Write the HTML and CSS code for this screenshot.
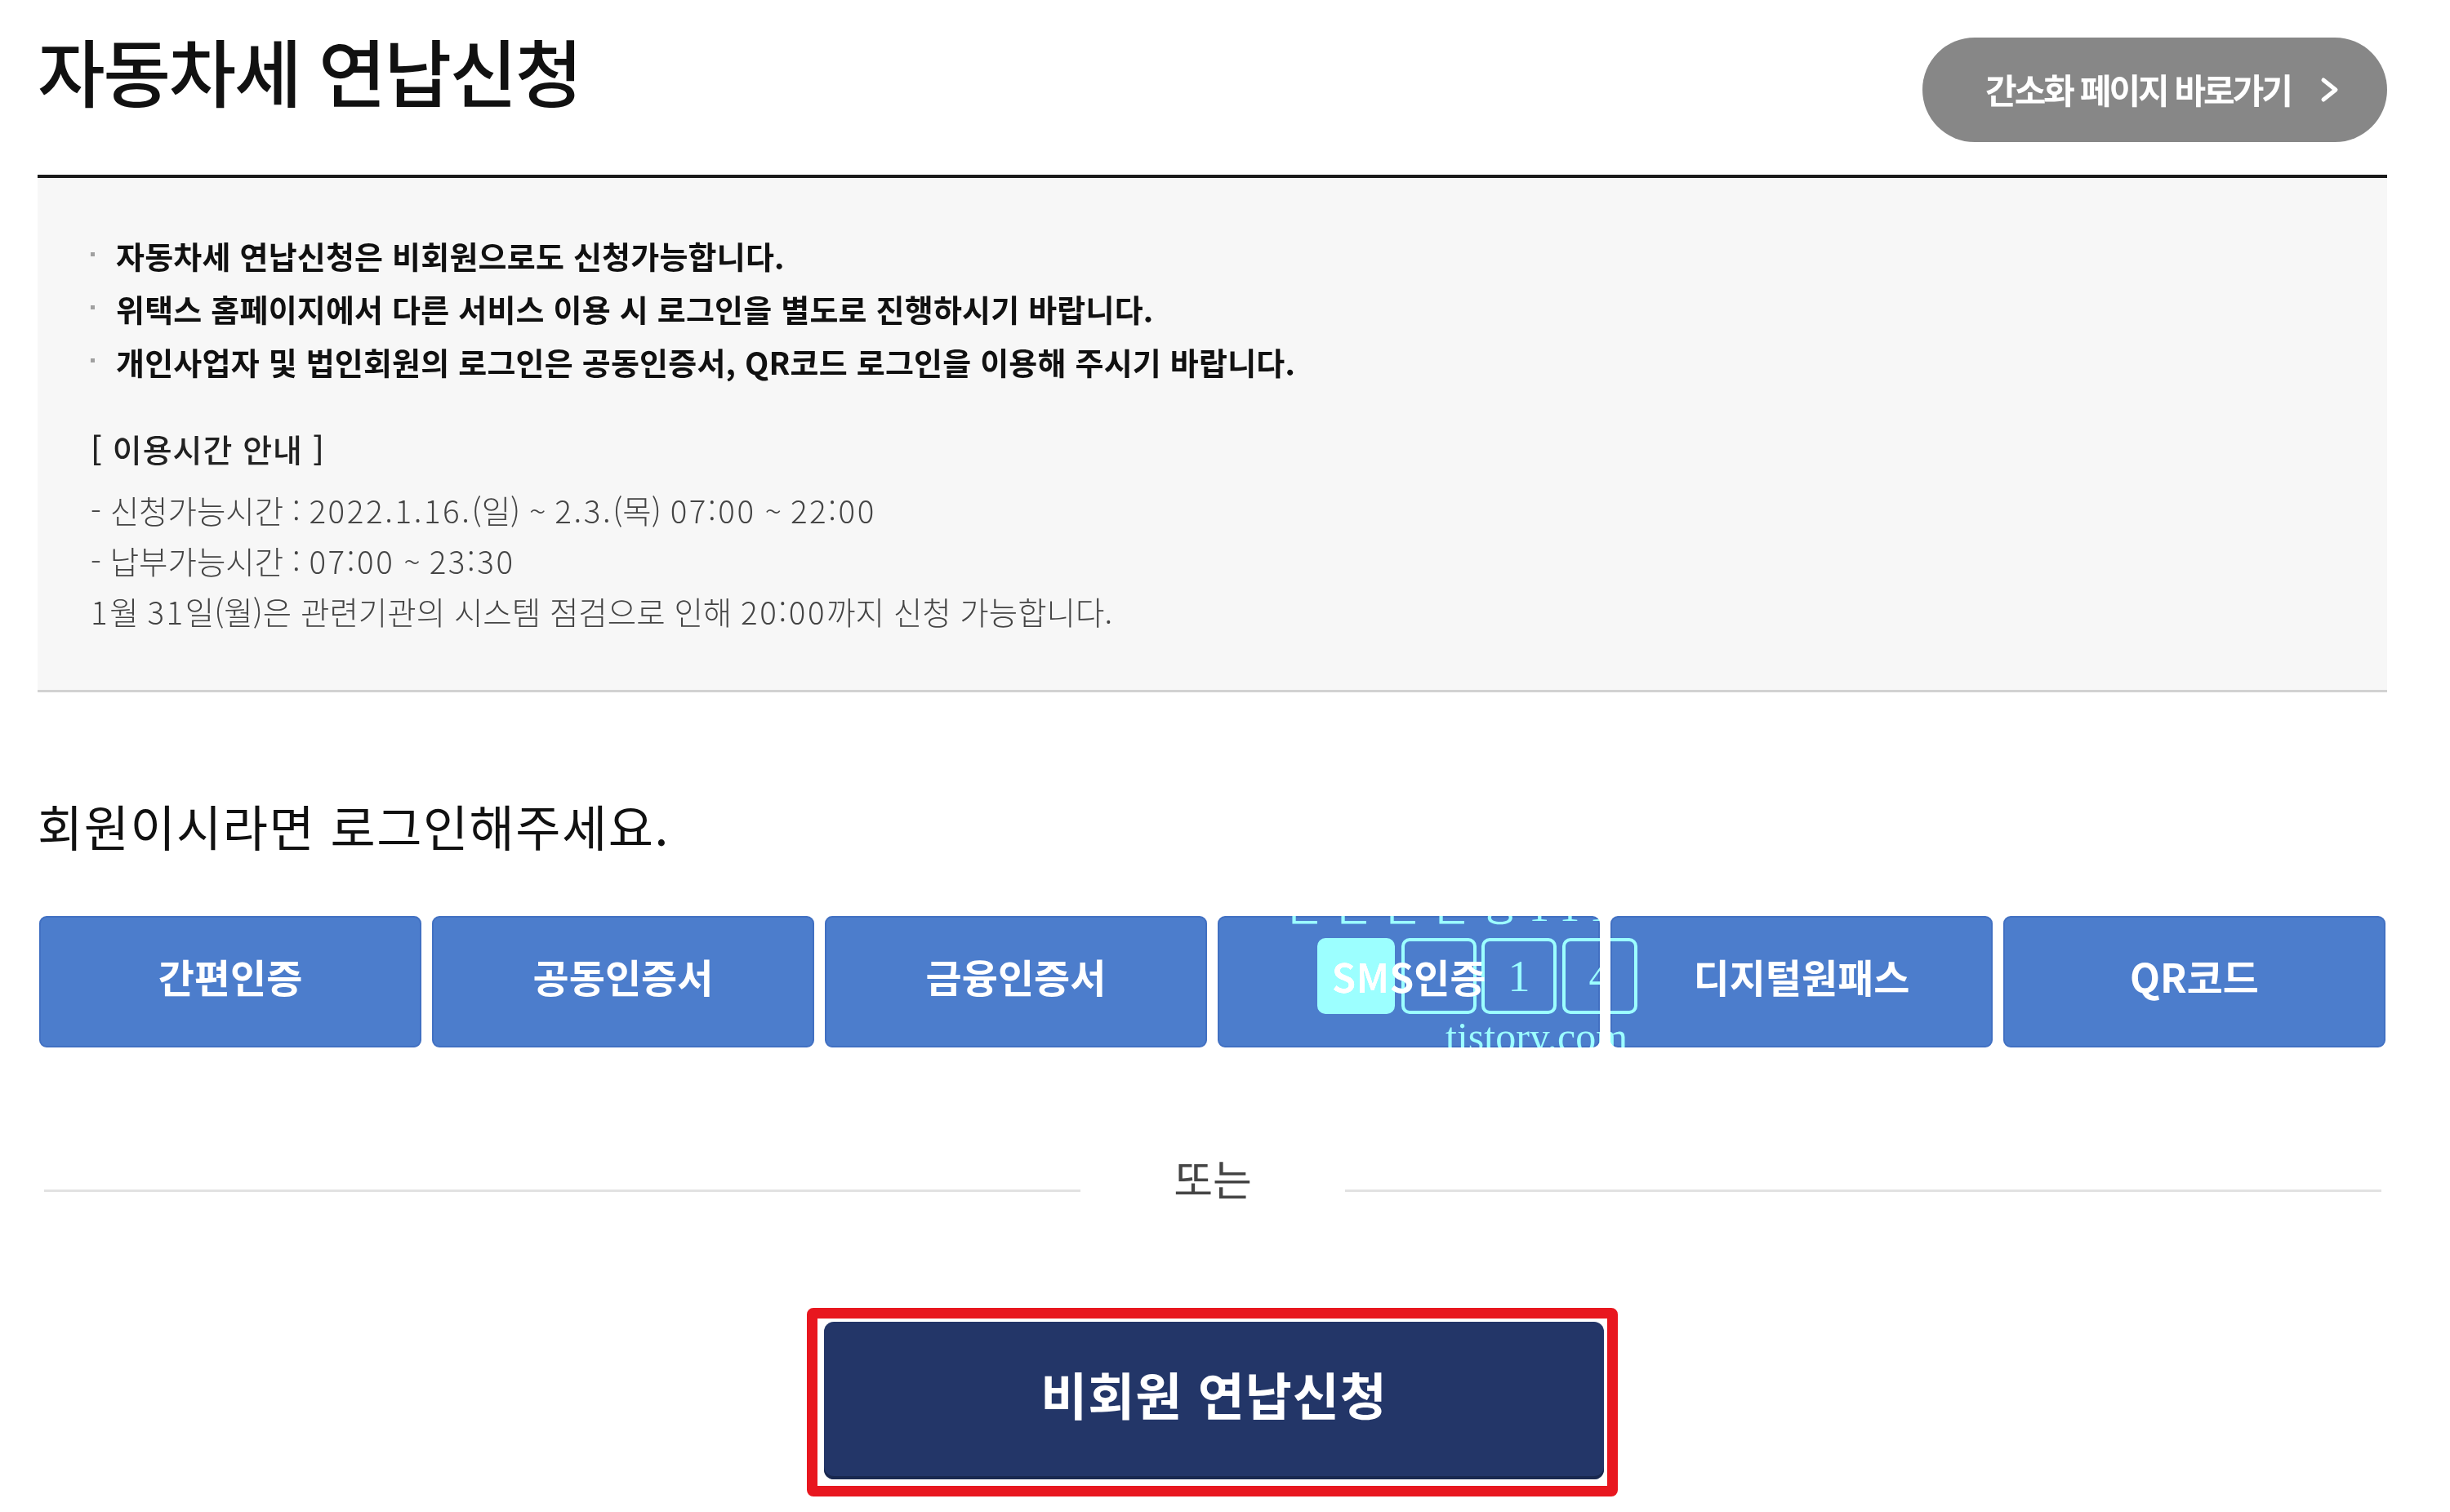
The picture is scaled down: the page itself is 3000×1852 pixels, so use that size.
FILE: index.html
```html
<!DOCTYPE html>
<html lang="ko">
<head>
    <meta charset="UTF-8">
    <meta name="viewport" content="width=device-width, initial-scale=1.0">
    <title>자동차세 연납신청</title>
    <link rel="stylesheet" href="styles.css">
</head>
<body>
    <div class="container">
        <div class="page-head">
            <h1>자동차세 연납신청</h1>
            <a class="simple-link" href="#">
                <span>간소화 페이지 바로가기</span>
                <svg width="23" height="32" viewBox="0 0 23 32"><polyline points="4,4 19,16 4,28" fill="none" stroke="#fff" stroke-width="5" stroke-linecap="round" stroke-linejoin="round"/></svg>
            </a>
        </div>

        <div class="notice">
            <ul class="notice-list">
                <li>자동차세 연납신청은 비회원으로도 신청가능합니다.</li>
                <li>위택스 홈페이지에서 다른 서비스 이용 시 로그인을 별도로 진행하시기 바랍니다.</li>
                <li>개인사업자 및 법인회원의 로그인은 공동인증서, QR코드 로그인을 이용해 주시기 바랍니다.</li>
            </ul>
            <p class="time-title">[ 이용시간 안내 ]</p>
            <p class="time-info">
                - 신청가능시간 : <span class="num">2022.1.16.</span>(일) ~ <span class="num">2.3.</span>(목) <span class="num">07:00</span> ~ <span class="num">22:00</span><br>
                - 납부가능시간 : <span class="num">07:00</span> ~ <span class="num">23:30</span><br>
                <span class="num">1</span>월 <span class="num">31</span>일(월)은 관련기관의 시스템 점검으로 인해 <span class="num">20:00</span>까지 신청 가능합니다.
            </p>
        </div>

        <h2 class="login-title">회원이시라면 로그인해주세요.</h2>

        <div class="login-row">
            <button class="login-btn">간편인증</button>
            <button class="login-btn">공동인증서</button>
            <button class="login-btn">금융인증서</button>
            <button class="login-btn">SMS인증</button>
            <button class="login-btn">디지털원패스</button>
            <button class="login-btn">QR코드</button>

            <!-- blog watermark sitting over the buttons -->
            <div class="watermark">
                <div class="wm-top">신신신신청111</div>
                <div class="wm-box wm-fill"></div>
                <div class="wm-box wm-b1"></div>
                <div class="wm-box wm-b2">1</div>
                <div class="wm-box wm-b3">4</div>
                <div class="wm-site">tistory.com</div>
            </div>
        </div>

        <div class="divider"><span>또는</span></div>

        <div class="guest-wrap">
            <div class="guest-frame">
                <button class="guest-btn">비회원 연납신청</button>
            </div>
        </div>
    </div>
</body>
</html>
```

FILE: styles.css
```css
body {
    margin: 0;
    background: #fff;
    font-family: "Noto Sans CJK KR", "Noto Sans", sans-serif;
    color: #111;
}
.container {
    padding: 0 77px 0 46px;
}
.page-head {
    display: flex;
    justify-content: space-between;
    align-items: flex-start;
    padding: 25px 0 40px;
    border-bottom: 4px solid #1a1a1a;
}
h1 {
    margin: 0;
    font-size: 90px;
    line-height: 120px;
    font-weight: 500;
    letter-spacing: -2.5px;
    color: #111;
}
.simple-link {
    margin-top: 21px;
    height: 128px;
    box-sizing: border-box;
    padding: 0 59px 4px 77px;
    border-radius: 64px;
    background: #878787;
    color: #fff;
    font-size: 42px;
    font-weight: 700;
    letter-spacing: -3px;
    display: flex;
    align-items: center;
    gap: 36px;
    text-decoration: none;
}
.simple-link svg {
    margin-top: 4px;
}
.notice {
    background: #f7f7f7;
    border-bottom: 3px solid #d2d2d2;
    padding: 62px 65px 66px;
}
.notice-list {
    list-style: none;
    margin: 0;
    padding: 0;
}
.notice-list li {
    display: flex;
    align-items: center;
    font-size: 38px;
    line-height: 65px;
    font-weight: 700;
    letter-spacing: 0.2px;
    color: #111;
}
.notice-list li::before {
    content: "";
    flex-shrink: 0;
    width: 5px;
    height: 5px;
    margin: -2px 26px 0 0;
    background: #a0a0a0;
}
.time-title {
    margin: 43px 0 13px;
    font-size: 39px;
    line-height: 62px;
    font-weight: 500;
    letter-spacing: 1px;
    color: #222;
}
.time-info {
    margin: 0;
    font-size: 38.5px;
    line-height: 62px;
    font-weight: 300;
    color: #444;
}
.time-info .num {
    letter-spacing: 2.6px;
}
.login-title {
    margin: 123px 0 0;
    font-size: 60px;
    line-height: 80px;
    font-weight: 400;
    letter-spacing: 1.5px;
    color: #111;
}
.login-row {
    position: relative;
    display: grid;
    grid-template-columns: repeat(6, 1fr);
    gap: 13px;
    margin: 71px 2px 0;
}
.login-btn {
    height: 161px;
    padding: 0 0 16px;
    background: #4c7dcc;
    border: 2px solid #4170c2;
    border-radius: 9px;
    color: #fff;
    font-family: "Noto Sans CJK KR", "Noto Sans", sans-serif;
    font-size: 48px;
    font-weight: 700;
    letter-spacing: 0;
}
.watermark {
    position: absolute;
    left: 1524px;
    top: -36px;
    width: 480px;
    height: 220px;
    mix-blend-mode: lighten;
    pointer-events: none;
    color: #9cffff;
}
.wm-top {
    position: absolute;
    left: 0;
    top: 0;
    font-family: "Liberation Serif", "Noto Sans CJK KR", serif;
    font-size: 50px;
    line-height: 50px;
    letter-spacing: 14px;
    white-space: nowrap;
}
.wm-box {
    position: absolute;
    top: 63px;
    width: 92px;
    height: 93px;
    box-sizing: border-box;
    border: 4px solid #9cffff;
    border-radius: 10px;
    display: flex;
    align-items: center;
    justify-content: center;
    font-family: "Liberation Serif", serif;
    font-size: 54px;
}
.wm-fill {
    left: 41px;
    width: 95px;
    background: #9cffff;
}
.wm-b1 { left: 144px; }
.wm-b2 { left: 242px; }
.wm-b3 { left: 341px; }
.wm-site {
    position: absolute;
    left: 198px;
    top: 159px;
    font-family: "Liberation Serif", serif;
    font-size: 50px;
    line-height: 50px;
}
.divider {
    display: flex;
    align-items: center;
    margin: 130px 7px 0 8px;
}
.divider::before,
.divider::after {
    content: "";
    flex: 1;
    height: 3px;
    background: #e2e2e2;
}
.divider span {
    padding: 0 114px 30px;
    font-size: 52px;
    line-height: 60px;
    color: #444;
}
.guest-wrap {
    display: flex;
    justify-content: center;
    margin-top: 99px;
}
.guest-frame {
    padding: 4px 4px 8px 8px;
    border: 13px solid #e8171f;
    border-radius: 8px;
    background: #fff;
}
.guest-btn {
    display: block;
    width: 955px;
    height: 193px;
    padding: 0 0 18px;
    background: #233668;
    border: none;
    border-radius: 12px;
    box-shadow: inset 0 -4px 0 #19284f;
    color: #fff;
    font-family: "Noto Sans CJK KR", "Noto Sans", sans-serif;
    font-size: 62px;
    font-weight: 700;
    letter-spacing: 1px;
}
```
